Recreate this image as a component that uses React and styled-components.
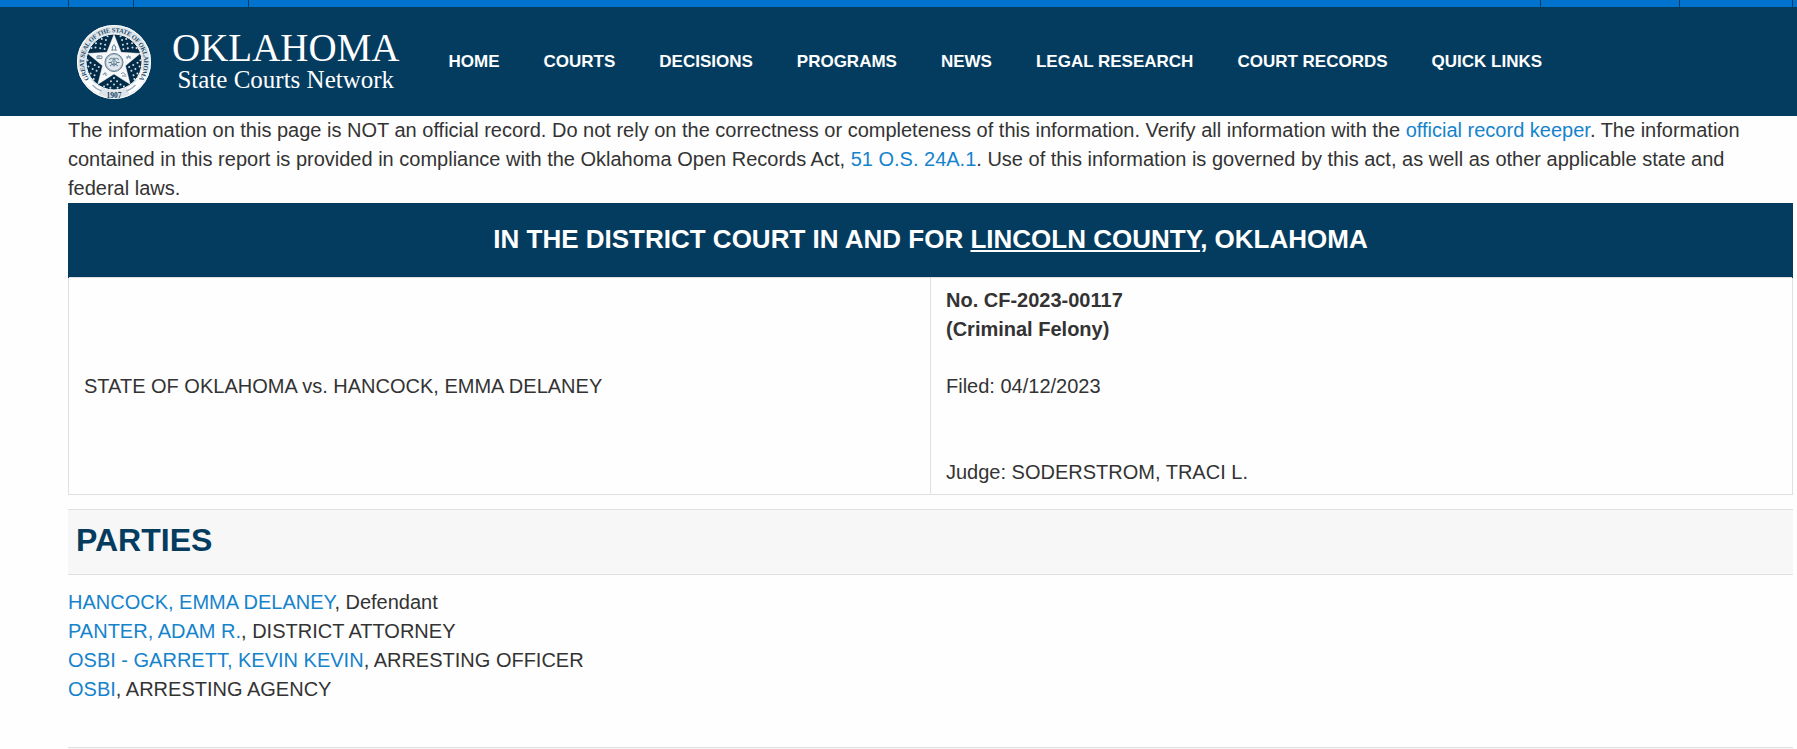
import React from 'react';
import styled, { createGlobalStyle } from 'styled-components';

const navy = '#043c60';
const line = '#e0e0e0';

const GlobalStyle = createGlobalStyle`
  * {
    box-sizing: border-box;
  }

  body {
    margin: 0;
    background: #fefefe;
    color: #333333;
    font-family: "Liberation Sans", Arial, sans-serif;
    font-size: 20px;
    line-height: 29px;
  }
`;

const Page = styled.div`
  min-height: 100vh;
  display: flex;
  flex-direction: column;
`;

const TopBar = styled.div`
  background: #0073cf;
  padding: 0 4px 0 68px;
`;

const TopBarInner = styled.div`
  height: 7px;
  display: flex;
  border-right: 1px solid ${navy};
`;

const TopBarCell = styled.div`
  width: ${({ $width }) => $width || 'auto'};
  flex-grow: ${({ $width }) => ($width ? 0 : 1)};
  border-left: 1px solid ${navy};
`;

const Header = styled.header`
  background: ${navy};
  min-height: 109px;
  padding: 0 4px 0 76px;
  display: flex;
  align-items: center;
`;

const Brand = styled.a`
  display: flex;
  align-items: center;
  gap: 20px;
  color: #ffffff;
  text-decoration: none;
`;

const Seal = styled.svg`
  width: 76px;
  height: 76px;
  flex: none;
`;

const BrandText = styled.span`
  display: flex;
  flex-direction: column;
  align-items: center;
  font-family: "Liberation Serif", "Times New Roman", serif;
  white-space: nowrap;
`;

const BrandName = styled.span`
  font-size: 39px;
  line-height: 36px;
`;

const BrandSub = styled.span`
  font-size: 25px;
  line-height: 28px;
`;

const Nav = styled.nav`
  display: flex;
  gap: 44px;
  margin-left: 49px;
`;

const NavLink = styled.a`
  color: #ffffff;
  font-size: 17px;
  font-weight: bold;
  text-decoration: none;
  white-space: nowrap;
`;

const Main = styled.main`
  padding: 0 4px 0 68px;
  flex: 1;
  display: flex;
  flex-direction: column;
`;

const Notice = styled.p`
  margin: 0;
  padding-right: 16px;
`;

const TextLink = styled.a`
  color: #1583cc;
  text-decoration: none;
`;

const CaseTable = styled.table`
  width: 100%;
  border-collapse: collapse;
  table-layout: fixed;
  margin-bottom: 14px;
`;

const CourtName = styled.th`
  background: ${navy};
  border-left: 1px solid ${navy};
  border-right: 1px solid ${navy};
  color: #ffffff;
  font-size: 26px;
  line-height: 32px;
  padding: 20px 14px 22px;
`;

const CaseCell = styled.td`
  border: 1px solid ${line};
  padding: 8px 15px 7px;
  vertical-align: middle;
`;

const CaseNumber = styled.strong`
  display: block;
`;

const Filed = styled.div`
  margin-top: 28px;
`;

const Judge = styled.div`
  margin-top: 57px;
`;

const SectionTitle = styled.h2`
  margin: 0;
  padding: 10px 8px 14px;
  background: #f7f7f7;
  border-top: 1px solid ${line};
  border-bottom: 1px solid ${line};
  color: ${navy};
  font-size: 32px;
  line-height: 40px;
`;

const Parties = styled.ul`
  margin: 0;
  padding: 13px 0 43px;
  list-style: none;
`;

const NextSection = styled.div`
  flex: 1;
  background: #f7f7f7;
  border-top: 1px solid ${line};
`;

const navItems = [
  'HOME',
  'COURTS',
  'DECISIONS',
  'PROGRAMS',
  'NEWS',
  'LEGAL RESEARCH',
  'COURT RECORDS',
  'QUICK LINKS',
];

const parties = [
  { name: 'HANCOCK, EMMA DELANEY', role: 'Defendant' },
  { name: 'PANTER, ADAM R.', role: 'DISTRICT ATTORNEY' },
  { name: 'OSBI - GARRETT, KEVIN KEVIN', role: 'ARRESTING OFFICER' },
  { name: 'OSBI', role: 'ARRESTING AGENCY' },
];

const polar = (radius, degrees) => {
  const angle = ((degrees - 90) * Math.PI) / 180;
  return [76 + radius * Math.cos(angle), 76 + radius * Math.sin(angle)];
};

const starPoints = Array.from({ length: 10 }, (_, i) =>
  polar(i % 2 ? 24 : 55, i * 36).join(',')
).join(' ');

// small stars that fill the five gaps between the arms
const dots = [0, 1, 2, 3, 4].flatMap((gap) =>
  [
    [32, 0],
    [39, -9],
    [39, 9],
    [45, 0],
    [47, -16],
    [47, 16],
    [52, -8],
    [52, 8],
    [53, -22],
    [53, 22],
  ].map(([radius, offset]) => polar(radius, 36 + gap * 72 + offset))
);

const StateSeal = () => (
  <Seal viewBox="0 0 152 152" role="img" aria-label="Great Seal of the State of Oklahoma">
    <defs>
      <path id="ring" d="M 21 111 A 65 65 0 1 1 131 111" />
    </defs>
    <circle cx="76" cy="76" r="65" fill="none" stroke="#dde5ea" strokeWidth="18" />
    <circle cx="76" cy="76" r="73" fill="none" stroke="#ffffff" strokeWidth="2" />
    <circle cx="76" cy="76" r="56" fill="#032c49" stroke="#ffffff" strokeWidth="2" />
    <path d="M 14 93 A 64 64 0 0 0 48 134" fill="none" stroke="#ffffff" strokeWidth="13" />
    <path d="M 138 93 A 64 64 0 0 1 104 134" fill="none" stroke="#ffffff" strokeWidth="13" />
    <path
      d="M 33 122 q 8 9 18 12 M 119 122 q -8 9 -18 12"
      fill="none"
      stroke="#9db0be"
      strokeWidth="3"
    />
    <text fill="#1d4a69" fontFamily="Liberation Serif" fontSize="13" fontWeight="bold">
      <textPath href="#ring" startOffset="50%" textAnchor="middle">
        <tspan dy="5">GREAT SEAL OF THE STATE OF OKLAHOMA</tspan>
      </textPath>
    </text>
    <text
      x="76"
      y="147"
      textAnchor="middle"
      fill="#12405f"
      fontFamily="Liberation Serif"
      fontSize="15"
      fontWeight="bold"
    >
      1907
    </text>
    {dots.map(([x, y], i) => (
      <circle key={i} cx={x} cy={y} r="2" fill="#d5dfe6" />
    ))}
    <polygon points={starPoints} fill="#f6f8f9" stroke="#ffffff" strokeWidth="1" />
    <g fill="none" stroke="#7690a3" strokeWidth="2">
      <path d="M 72 48 l 4 -7 l 4 7 M 70 52 h 12 M 73 44 v 9 M 79 44 v 9" />
      <path d="M 42 64 h 10 v 5 h -10 z M 46 62 v 8" />
      <path d="M 100 66 h 10 M 102 70 l 3 -7 l 4 7" />
      <path d="M 54 102 q 4 -8 8 -1 M 56 98 l 5 6" />
      <path d="M 90 100 q 5 -6 9 2 M 92 104 h 9" />
    </g>
    <circle cx="76" cy="77" r="18" fill="#b8c6d0" stroke="#5d7c92" strokeWidth="2" />
    <circle cx="76" cy="77" r="14" fill="#dfe6eb" stroke="#ffffff" strokeWidth="1" />
    <path
      d="M 66 71 q 5 -5 10 0 q 5 -5 10 0 M 65 77 h 6 l 2 -4 M 87 77 h -6 l -2 -4 M 76 67 v 18 M 68 84 q 8 -8 16 0 M 71 78 l 3 5 M 81 78 l -3 5"
      fill="none"
      stroke="#587990"
      strokeWidth="2"
    />
  </Seal>
);

const App = () => {
  return (
    <>
      <GlobalStyle />
      <Page>
        <TopBar>
          <TopBarInner>
            <TopBarCell $width="65px" />
            <TopBarCell $width="115px" />
            <TopBarCell />
            <TopBarCell $width="139px" />
            <TopBarCell $width="113px" />
          </TopBarInner>
        </TopBar>
        <Header>
          <Brand href="#">
            <StateSeal />
            <BrandText>
              <BrandName>OKLAHOMA</BrandName>
              <BrandSub>State Courts Network</BrandSub>
            </BrandText>
          </Brand>
          <Nav>
            {navItems.map((item) => (
              <NavLink href="#" key={item}>
                {item}
              </NavLink>
            ))}
          </Nav>
        </Header>
        <Main>
          <Notice>
            The information on this page is NOT an official record. Do not rely on the
            correctness or completeness of this information. Verify all information with
            the <TextLink href="#">official record keeper</TextLink>. The information
            contained in this report is provided in compliance with the Oklahoma Open
            Records Act, <TextLink href="#">51 O.S. 24A.1</TextLink>. Use of this
            information is governed by this act, as well as other applicable state and
            federal laws.
          </Notice>
          <CaseTable>
            <thead>
              <tr>
                <CourtName colSpan={2}>
                  IN THE DISTRICT COURT IN AND FOR <u>LINCOLN COUNTY</u>, OKLAHOMA
                </CourtName>
              </tr>
            </thead>
            <tbody>
              <tr>
                <CaseCell>STATE OF OKLAHOMA vs. HANCOCK, EMMA DELANEY</CaseCell>
                <CaseCell>
                  <CaseNumber>No. CF-2023-00117</CaseNumber>
                  <CaseNumber>(Criminal Felony)</CaseNumber>
                  <Filed>Filed: 04/12/2023</Filed>
                  <Judge>Judge: SODERSTROM, TRACI L.</Judge>
                </CaseCell>
              </tr>
            </tbody>
          </CaseTable>
          <SectionTitle>PARTIES</SectionTitle>
          <Parties>
            {parties.map(({ name, role }) => (
              <li key={name}>
                <TextLink href="#">{name}</TextLink>, {role}
              </li>
            ))}
          </Parties>
          <NextSection />
        </Main>
      </Page>
    </>
  );
};

export default App;
